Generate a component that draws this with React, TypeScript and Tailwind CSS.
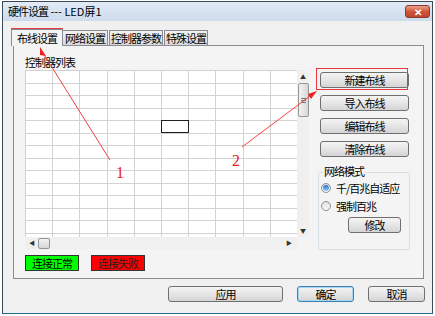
import type { ReactNode } from 'react';

const font = { fontFamily: '"Noto Sans CJK SC", "Noto Sans", sans-serif' };

const Btn = ({ children, className = '', focused = false }: { children: ReactNode; className?: string; focused?: boolean }) => (
  <div
    className={`flex items-center justify-center rounded-[3px] border text-[11px] tracking-[-1px] leading-none text-black bg-gradient-to-b from-[#f4f4f4] via-[#e6e6e6] to-[#d4d4d4] ${
      focused ? 'border-[#3c7fb1] shadow-[inset_0_0_0_1px_#a6d8f5]' : 'border-[#707070]'
    } ${className}`}
  >
    {children}
  </div>
);

const Radio = ({ checked }: { checked: boolean }) => (
  <div className="w-[10px] h-[10px] rounded-full border border-[#8e8f8f] bg-gradient-to-b from-[#e0e0e0] to-[#fafafa] flex items-center justify-center">
    {checked && <div className="w-[6px] h-[6px] rounded-full bg-gradient-to-b from-[#2a6fc4] to-[#8ad0ff]" />}
  </div>
);

const Grid = () => {
  const rows = Array.from({ length: 14 });
  const cols = Array.from({ length: 10 });
  return (
    <div className="relative w-[272px] h-[167px] bg-white overflow-hidden">
      <div className="grid grid-cols-[repeat(10,27.2px)] auto-rows-[12.5px]">
        {rows.map((_, r) =>
          cols.map((_, c) => (
            <div key={`${r}-${c}`} className="border-l border-t border-[#d2d2d2]" />
          ))
        )}
      </div>
      <div className="absolute left-[136px] top-[50px] w-[28px] h-[13px] border border-[#202020]" />
    </div>
  );
};

const tab = 'h-[15px] flex items-center justify-center border border-b-0 border-[#898c95] bg-gradient-to-b from-[#f2f2f2] to-[#dadada] text-[11px] tracking-[-1px] leading-none';

export default function App() {
  return (
    <div className="relative w-[435px] h-[316px] bg-white overflow-hidden" style={font}>
      <div className="ml-[2px] mt-[1px] w-[431px] h-[313px] border border-[#3b4a5b] border-b-[#2a6f8f] flex flex-col">
        {/* title bar */}
        <div className="h-[19px] flex items-center justify-between pl-[5px] pr-[2px] bg-gradient-to-b from-[#e2ebf6] to-[#cddbec]">
          <span className="text-[11px] leading-none text-black whitespace-pre">
            <span className="tracking-[-1px]">硬件设置</span> --- LED屏1
          </span>
          <div className="w-[25px] h-[13px] rounded-[3px] border border-[#8a3a2a] bg-gradient-to-b from-[#e8a08a] via-[#d0553a] to-[#c04530] flex items-center justify-center text-white text-[10px] font-bold leading-none">
            ✕
          </div>
        </div>

        {/* client */}
        <div className="flex-1 bg-[#f0f0f0] flex flex-col">
          {/* tabs */}
          <div className="ml-[8px] mt-[7px] flex items-end h-[17px]">
            <div className="w-[52px] h-[17px] flex items-center justify-center border border-b-0 border-[#898c95] bg-[#f4f4f4] text-[11px] tracking-[-1px] leading-none relative z-10 -mb-px">
              布线设置
            </div>
            <div className={`w-[45px] border-l-0 ${tab}`}>网络设置</div>
            <div className={`ml-[1px] w-[54px] ${tab}`}>控制器参数</div>
            <div className={`ml-[1px] w-[44px] ${tab}`}>特殊设置</div>
          </div>

          {/* tab panel */}
          <div className="ml-[10px] w-[411px] h-[234px] border border-[#898c95] bg-[#f4f4f4] flex pl-[11px] pt-[11px] gap-[7px]">
            <div className="w-[284px] flex flex-col">
              <div className="text-[11px] tracking-[-1px] leading-none h-[13px] text-black">控制器列表</div>
              <div className="flex">
                <Grid />
                {/* vertical scrollbar */}
                <div className="w-[12px] h-[167px] bg-[#f0f0f0] flex flex-col items-center">
                  <div className="h-[13px] flex items-center justify-center text-[6px] text-[#333]">▲</div>
                  <div className="w-[11px] h-[34px] rounded-[2px] border border-[#959595] bg-gradient-to-r from-[#f2f2f2] to-[#d8d8d8] flex flex-col items-center justify-center gap-[1px]">
                    <div className="w-[5px] h-px bg-[#777]" />
                    <div className="w-[5px] h-px bg-[#777]" />
                    <div className="w-[5px] h-px bg-[#777]" />
                  </div>
                  <div className="flex-1" />
                  <div className="h-[13px] flex items-center justify-center text-[6px] text-[#333]">▼</div>
                </div>
              </div>
              {/* horizontal scrollbar */}
              <div className="w-[272px] h-[12px] bg-[#f0f0f0] flex items-center pl-[4px] pr-[5px]">
                <span className="text-[6px] text-[#333] leading-none">◀</span>
                <div className="ml-[3px] w-[12px] h-[11px] rounded-[2px] border border-[#959595] bg-gradient-to-b from-[#f2f2f2] to-[#d8d8d8]" />
                <div className="flex-1" />
                <span className="text-[6px] text-[#333] leading-none">▶</span>
              </div>
              <div className="flex gap-[12px] mt-[6px]">
                <div className="w-[54px] h-[16px] bg-[#00ff00] border border-[#333] flex items-center justify-center text-[11px] tracking-[-1px] leading-none text-black">
                  连接正常
                </div>
                <div className="w-[54px] h-[16px] bg-[#ff0000] border border-[#333] flex items-center justify-center text-[11px] tracking-[-1px] leading-none text-[#222]">
                  连接失败
                </div>
              </div>
            </div>

            {/* right column */}
            <div className="w-[93px] flex flex-col pt-[15px]">
              <div className="flex flex-col gap-[7px] pl-[4px]">
                <Btn className="w-[89px] h-[16px]">新建布线</Btn>
                <Btn className="w-[89px] h-[16px]">导入布线</Btn>
                <Btn className="w-[89px] h-[16px]">编辑布线</Btn>
                <Btn className="w-[89px] h-[16px]">清除布线</Btn>
              </div>
              <div className="relative mt-[15px] ml-[2px] w-[92px] h-[78px] border border-[#d5dfe5] rounded-[3px]">
                <div className="absolute -top-[7px] left-[4px] bg-[#f4f4f4] px-px text-[11px] tracking-[-1px] leading-none text-black">网络模式</div>
                <div className="flex flex-col pl-[2px] pt-[9px] text-[11px] tracking-[-1px] leading-none text-black">
                  <div className="flex items-center gap-[5px] h-[12px]">
                    <Radio checked />
                    <span>千/百兆自适应</span>
                  </div>
                  <div className="flex items-center gap-[5px] h-[12px] mt-[6px]">
                    <Radio checked={false} />
                    <span>强制百兆</span>
                  </div>
                  <div className="flex justify-end pr-[8px] mt-[5px]">
                    <Btn className="w-[53px] h-[16px]">修改</Btn>
                  </div>
                </div>
              </div>
            </div>
          </div>

          {/* bottom buttons */}
          <div className="flex mt-[7px] pl-[165px] gap-[14px]">
            <Btn className="w-[115px] h-[16px]">应用</Btn>
            <Btn className="w-[57px] h-[16px]" focused>确定</Btn>
            <Btn className="w-[57px] h-[16px]">取消</Btn>
          </div>
        </div>
      </div>

      {/* annotations */}
      <div className="absolute left-[11px] top-[28px] w-[52px] h-[18px] border border-[#e8383d] pointer-events-none" />
      <div className="absolute left-[316px] top-[68px] w-[92px] h-[22px] border border-[#e8383d] pointer-events-none" />
      <svg className="absolute left-0 top-0 pointer-events-none" width="435" height="316" viewBox="0 0 435 316">
        <line x1="110" y1="160" x2="43" y2="53" stroke="#f04040" strokeWidth="1" />
        <polygon points="40,47 46,56 40,55" fill="#f02020" />
        <line x1="242" y1="147" x2="310" y2="96" stroke="#f04040" strokeWidth="1" />
        <polygon points="317,91 311,99 308,94" fill="#f02020" />
        <text x="116" y="178" fill="#e82020" fontSize="16" fontFamily="Liberation Serif, serif">1</text>
        <text x="232" y="166" fill="#e82020" fontSize="16" fontFamily="Liberation Serif, serif">2</text>
      </svg>
    </div>
  );
}
